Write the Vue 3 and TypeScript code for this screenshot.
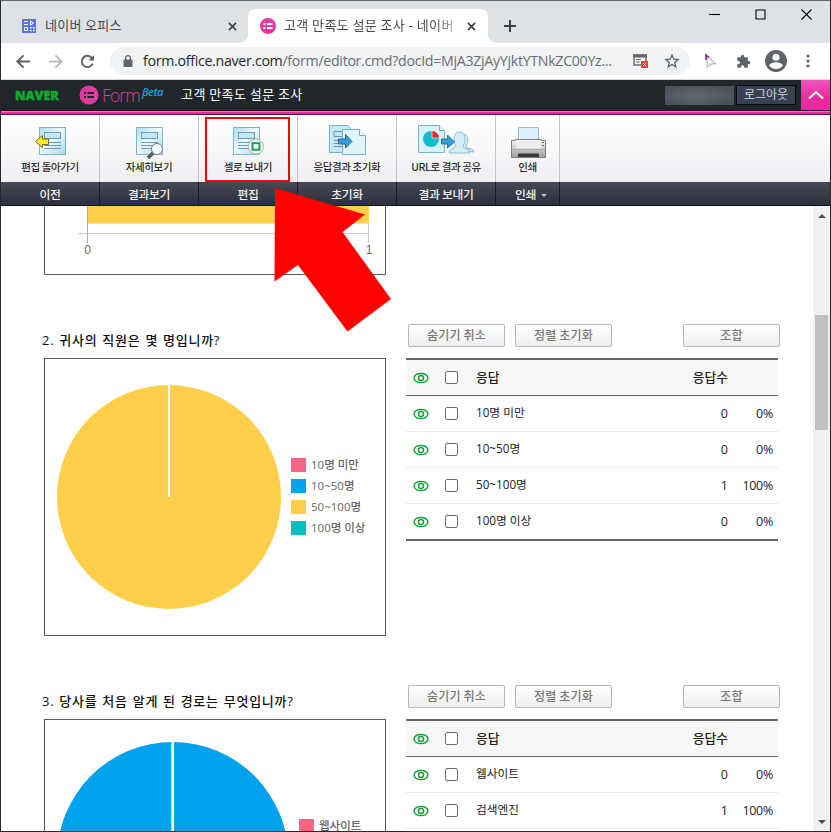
<script setup lang="ts">
interface Answer { label: string; count: number; percent: string }
interface Question {
  title: string
  answers: Answer[]
  legend: { label: string; color: string }[]
  pie: { cx: number; cy: number; r: number; color: string; gap: number }
  kind: string
}

const tools = [
  { icon: 'back', label: '편집 돌아가기', group: '이전' },
  { icon: 'detail', label: '자세히보기', group: '결과보기' },
  { icon: 'cell', label: '셀로 보내기', group: '편집' },
  { icon: 'reset', label: '응답결과 초기화', group: '초기화' },
  { icon: 'share', label: 'URL로 결과 공유', group: '결과 보내기' },
  { icon: 'print', label: '인쇄', group: '인쇄' },
]

const questions: Question[] = [
  {
    title: '2. 귀사의 직원은 몇 명입니까?',
    kind: 'staff',
    answers: [
      { label: '10명 미만', count: 0, percent: '0%' },
      { label: '10~50명', count: 0, percent: '0%' },
      { label: '50~100명', count: 1, percent: '100%' },
      { label: '100명 이상', count: 0, percent: '0%' },
    ],
    legend: [
      { label: '10명 미만', color: '#ff6384' },
      { label: '10~50명', color: '#00a2ee' },
      { label: '50~100명', color: '#ffce4b' },
      { label: '100명 이상', color: '#00c2bc' },
    ],
    pie: { cx: 124, cy: 138, r: 112, color: '#ffce4b', gap: 2 },
  },
  {
    title: '3. 당사를 처음 알게 된 경로는 무엇입니까?',
    kind: 'route',
    answers: [
      { label: '웹사이트', count: 0, percent: '0%' },
      { label: '검색엔진', count: 1, percent: '100%' },
    ],
    legend: [{ label: '웹사이트', color: '#ff6384' }],
    pie: { cx: 127.7, cy: 137.6, r: 115.6, color: '#00a2ee', gap: 2.6 },
  },
]
</script>

<template>
  <div class="window">
    <header class="tabs">
      <div class="tab idle">
        <svg class="fav" viewBox="0 0 14 14">
          <rect width="14" height="14" fill="#5a76dc" />
          <g fill="none" stroke="#fff" stroke-width="1"><path d="M2 2.5h4M2 5.5h4M2.5 8.5h3v3h-3zM8.5 2v4l3-2z" /></g>
          <g fill="#fff"><rect x="8" y="8" width="1.5" height="1.5" /><rect x="11" y="8" width="1.5" height="1.5" /><rect x="8" y="10.800" width="1.500" height="1.500" /><rect x="11" y="10.800" width="1.500" height="1.500" /></g>
        </svg>
        <span class="tab-name">네이버 오피스</span>
        <svg class="close" viewBox="0 0 10 10"><path d="M1 1l8 8M9 1L1 9" /></svg>
      </div>
      <div class="tab active">
        <svg class="fav round" viewBox="0 0 16 16">
          <circle cx="8" cy="8" r="8" fill="#e23b9f" />
          <path d="M3.500 6h2M7 6h5.500M3.500 10h2M7 10h5.500" stroke="#fff" stroke-width="2" />
        </svg>
        <span class="tab-name">고객 만족도 설문 조사 - 네이버</span>
        <svg class="close" viewBox="0 0 10 10"><path d="M1 1l8 8M9 1L1 9" /></svg>
      </div>
      <svg class="plus" viewBox="0 0 12 12"><path d="M6 0v12M0 6h12" /></svg>
      <div class="winctl">
        <svg viewBox="0 0 11 11"><path d="M0 5.500h11" /></svg>
        <svg viewBox="0 0 11 11"><path d="M1 1h9v9h-9z" /></svg>
        <svg viewBox="0 0 11 11"><path d="M.5.500l10 10M10.500.500l-10 10" /></svg>
      </div>
    </header>

    <div class="toolbar">
      <svg class="nav" viewBox="0 0 16 16"><path d="M15 8H2M8 1.500L1.500 8 8 14.500" /></svg>
      <svg class="nav dim" viewBox="0 0 16 16"><path d="M1 8h13M8 1.500L14.500 8 8 14.500" /></svg>
      <svg class="nav" viewBox="0 0 16 16"><path d="M13.500 10.200A6 6 0 1 1 12.600 4.200" /><path d="M15 1v6H9z" class="fill" /></svg>
      <div class="address">
        <svg class="lock" viewBox="0 0 10 12"><rect y="4.500" x=".5" width="9" height="7.500" rx="1" fill="#5f6368" /><path d="M2.600 5V3a2.400 2.400 0 0 1 4.800 0v2" fill="none" stroke="#5f6368" stroke-width="1.200" /></svg>
        <span class="url"><b>form.office.naver.com</b>/form/editor.cmd?docId=MjA3ZjAyYjktYTNkZC00Yz...</span>
        <svg class="blocked" viewBox="0 0 15 14">
          <path d="M1 1h12v10H1z" fill="none" stroke="#6c6f73" stroke-width="1.500" /><path d="M0 2h14" stroke="#5f6368" stroke-width="3" /><path d="M3 5.500h5M3 8h4" stroke="#6c6f73" />
          <rect x="8" y="7" width="7" height="7" fill="#ea4335" /><path d="M10 9l3 3M13 9l-3 3" stroke="#fff" />
        </svg>
        <svg class="star" viewBox="0 0 14 14"><path d="M7 1l1.700 4.200 4.500.300-3.500 2.900 1.200 4.500L7 10.400 3.100 12.900l1.200-4.500L.800 5.500l4.500-.3z" fill="none" stroke="#5f6368" stroke-width="1.300" /></svg>
      </div>
      <svg class="cursor" viewBox="0 0 12 15"><path d="M1.500 1.500l9 8-4.500.5-3.500 3z" fill="#fff" stroke="#b9bbbe" stroke-width="1.300" /><path d="M1 6V1l3 2.700" fill="none" stroke="#8d2a99" stroke-width="1.600" /></svg>
      <svg class="puzzle" viewBox="0 0 24 24"><path fill="#5f6368" d="M20.500 11H19V7a2 2 0 0 0-2-2h-4V3.500a2.500 2.500 0 0 0-5 0V5H4a2 2 0 0 0-2 2v3.800h1.500a2.700 2.700 0 0 1 0 5.400H2V20a2 2 0 0 0 2 2h3.800v-1.500a2.700 2.700 0 0 1 5.400 0V22H17a2 2 0 0 0 2-2v-4h1.500a2.500 2.500 0 0 0 0-5z" /></svg>
      <svg class="avatar" viewBox="0 0 22 22"><circle cx="11" cy="11" r="11" fill="#5f6368" /><circle cx="11" cy="7.300" r="3.500" fill="#fff" /><path d="M4 15.500c1.500-2.300 4-3.300 7-3.300s5.500 1 7 3.300c-1.500 2.300-4 3.500-7 3.500s-5.500-1.200-7-3.500z" fill="#fff" /></svg>
      <svg class="more" viewBox="0 0 4 14"><circle cx="2" cy="2" r="1.600" /><circle cx="2" cy="7" r="1.600" /><circle cx="2" cy="12" r="1.600" /></svg>
    </div>

    <div class="appbar">
      <span class="naver">NAVER</span>
      <svg class="formlogo" viewBox="0 0 20 20"><circle cx="10" cy="10" r="9.500" fill="#e23b9f" /><path d="M5 8h2M8.500 8H15M5 12h2M8.500 12H15" stroke="#20262a" stroke-width="2" /></svg>
      <span class="form">Form</span><span class="beta">βeta</span>
      <span class="doc">고객 만족도 설문 조사</span>
      <span class="user"></span>
      <button class="logout">로그아웃</button>
      <span class="collapse"><svg viewBox="0 0 16 10"><path d="M1 8.500L8 2l7 6.500" fill="none" stroke="#fff" stroke-width="2" /></svg></span>
    </div>
    <div class="strip"></div>

    <nav class="ribbon">
      <div v-for="t in tools" :key="t.icon" class="tool" :class="t.icon">
        <div class="action">
          <svg v-if="t.icon !== 'print' && t.icon !== 'share' && t.icon !== 'reset'" class="pic" viewBox="0 0 36 34">
            <defs><linearGradient id="paper" x1="0" y1="0" x2="1" y2="1"><stop offset="0" stop-color="#a8dcee" /><stop offset=".45" stop-color="#eefaff" /><stop offset="1" stop-color="#a9d9e7" /></linearGradient></defs>
            <rect x="5.500" y="2.500" width="26" height="27" fill="url(#paper)" stroke="#78b6cc" />
            <rect x="10.500" y="7.500" width="16" height="6" fill="#c3e8f6" stroke="#6b9bb4" />
            <path d="M10 17.500h17M10 20.500h17M10 23.500h17" stroke="#6c9cb1" />
            <path v-if="t.icon === 'back'" d="M1.500 16.500l7-6v3.500h6v5.500h-6V22.500z" fill="#ffe928" stroke="#786d20" />
            <g v-else-if="t.icon === 'detail'"><path d="M22 28l-5 5" stroke="#535b62" stroke-width="3.500" /><circle cx="26" cy="24" r="5.500" fill="#f7fdff" stroke="#737b80" /></g>
            <g v-else><circle cx="28" cy="21.500" r="7.500" fill="#fff" stroke="#aaa" /><rect x="24.500" y="18.200" width="7" height="6.500" fill="#fff" stroke="#119d55" stroke-width="2" /></g>
          </svg>
          <svg v-else-if="t.icon === 'reset'" class="pic wide" viewBox="0 0 40 34">
            <path d="M2.500.500h18l4 4v23h-22z" fill="#c7e9f4" stroke="#77b2c6" /><path d="M7 6.500h9v5H7zM7 15.500h9M7 18.500h9M7 21.500h9" fill="#c6e8f6" stroke="#6394a9" />
            <path d="M15.500 4.500h17l6 6v19h-23z" fill="#dff5fc" stroke="#77b2c6" /><path d="M32.500 4.500v6h6" fill="#fff" stroke="#77b2c6" />
            <path d="M11.500 14h7V9.500l6.500 7-6.500 6.500v-4h-7z" fill="#36a1dd" stroke="#32647f" />
          </svg>
          <svg v-else-if="t.icon === 'share'" class="pic share-pic" viewBox="0 0 58 34">
            <path d="M1.500.500h21l5 5v22h-26z" fill="#d8f2fc" stroke="#77b2c6" /><path d="M22.500.500v5h5" fill="#fff" stroke="#77b2c6" /><circle cx="14" cy="14" r="8" fill="#10bdce" /><path d="M15 13V5.500a8 8 0 0 1 7.500 7.500z" fill="#ed2736" stroke="#fff" stroke-width=".6" />
            <g fill="#d4edf6" stroke="#8bbdcc">
              <path d="M45 25.500v-3.500q-1.500-1-1.500-3-2.500-8 3-9.500 6 0 4 7.500-.5 2.500-1.500 4.500 1 2 5 2.500 3 .5 3 3z" />
              <path d="M32 28q0-3 4-4.500 3-1 3-3-2-2-2-5 0-8.500 5.500-8.500t5.500 8q0 3.500-2 5.500 0 2 3 3.200 4 1.300 4 4.300z" />
            </g>
            <path d="M24.500 14h6V10l7 7-7 6v-4h-6z" fill="#36a1dd" stroke="#34718f" />
          </svg>
          <svg v-else class="pic" viewBox="0 0 36 34">
            <defs><linearGradient id="metal" x2="0" y2="1"><stop stop-color="#fafafa" /><stop offset="1" stop-color="#9b9b9b" /></linearGradient></defs>
            <path d="M8.500 2.500h20v16h-20z" fill="#dcf3fd" stroke="#94bdcf" /><path d="M1.500 15.500h4v-1h26v1h4v17h-34z" fill="url(#metal)" stroke="#7f7f7f" /><path d="M6 16.500h25v7H6z" fill="#ececec" /><path d="M2 24.500h33" stroke="#aaa" /><path d="M8 28.500h21v3.500H8z" fill="#393939" /><path d="M32 17.500h2M32 20.500h2" stroke="#666" />
          </svg>
          <span class="label">{{ t.label }}</span>
        </div>
        <div class="group">{{ t.group }}<i v-if="t.icon === 'print'"></i></div>
      </div>
      <div class="rest"><div class="action"></div><div class="group"></div></div>
    </nav>

    <div class="page">
      <main class="report">
        <svg class="bar-chart" viewBox="0 0 342 69">
          <path d="M.5 0v68.500h341V0" fill="none" stroke="#595959" />
          <path d="M43.500 0v37" stroke="#aaa" /><path d="M34 27.500h291M324.500 0v37" stroke="#ccc" />
          <rect x="44" width="281" height="17.500" fill="#ffce4b" />
          <text x="43.500" y="48">0</text><text x="325" y="48">1</text>
        </svg>
        <section v-for="q in questions" :key="q.kind" class="question" :class="q.kind">
          <div class="left">
            <h2>{{ q.title }}</h2>
            <div class="chart">
              <svg class="pie" viewBox="0 0 246 276">
                <circle :cx="q.pie.cx" :cy="q.pie.cy" :r="q.pie.r" :fill="q.pie.color" />
                <path :d="`M${q.pie.cx} ${q.pie.cy - q.pie.r - 1}V${q.pie.cy}`" stroke="#fff" :stroke-width="q.pie.gap" />
              </svg>
              <ul class="legend">
                <li v-for="l in q.legend" :key="l.label"><i :style="{ background: l.color }"></i>{{ l.label }}</li>
              </ul>
            </div>
          </div>
          <div class="right">
            <div class="buttons"><button>숨기기 취소</button><button>정렬 초기화</button><button class="combine">조합</button></div>
            <div class="table">
              <div class="row head">
                <svg class="eye" viewBox="0 0 16 12"><ellipse cx="8" cy="6" rx="6.900" ry="4.600" /><circle cx="8" cy="6" r="2.500" /></svg>
                <span class="check"></span><span class="name">응답</span><span class="count">응답수</span><span class="percent"></span>
              </div>
              <div v-for="a in q.answers" :key="a.label" class="row">
                <svg class="eye" viewBox="0 0 16 12"><ellipse cx="8" cy="6" rx="6.900" ry="4.600" /><circle cx="8" cy="6" r="2.500" /></svg>
                <span class="check"></span><span class="name">{{ a.label }}</span><span class="count">{{ a.count }}</span><span class="percent">{{ a.percent }}</span>
              </div>
            </div>
          </div>
        </section>
      </main>
      <div class="scroll"><i class="up"></i><div class="thumb"></div><i class="down"></i></div>
    </div>

    <div class="highlight"></div>
    <svg class="pointer" viewBox="0 0 118 145"><path d="M1 0l90 26.500L68.500 44 117 111 73.500 143.500 24 77 .5 93.500z" fill="#f00" /></svg>
  </div>
</template>

<style>
body { margin: 0; overflow: hidden; }
</style>

<style scoped>
* { box-sizing: border-box; }
svg { display: block; flex: none; overflow: visible; }
.window { position: relative; width: 831px; height: 832px; border: 1px solid #25282c; border-top-color: #65666b; background: #fff; display: flex; flex-direction: column; overflow: hidden; font-family: "Open Sans", "Noto Sans CJK KR", sans-serif; font-size: 13px; white-space: nowrap; }
.tabs { height: 42px; flex: none; background: #dee1e6; display: flex; align-items: flex-end; }
.tab { height: 34px; display: flex; align-items: center; color: #45494d; font: 13px "Noto Sans CJK KR", sans-serif; letter-spacing: .3px; }
.tab.idle { width: 247px; padding: 0 11px 0 21px; }
.tab.active { width: 240px; padding: 0 12px; background: #fff; border-radius: 8px 8px 0 0; position: relative; letter-spacing: .4px; }
.tab.active::before, .tab.active::after { content: ""; position: absolute; bottom: 0; width: 8px; height: 8px; }
.tab.active::before { left: -8px; background: radial-gradient(circle at 0 0, transparent 7.5px, #fff 8px); }
.tab.active::after { right: -8px; background: radial-gradient(circle at 100% 0, transparent 7.5px, #fff 8px); }
.fav { width: 14px; height: 14px; margin-right: 9px; }
.fav.round { width: 16px; height: 16px; margin-right: 8px; }
.tab-name { flex: 1; overflow: hidden; padding-bottom: 3px; }
.active .tab-name { flex: none; width: 172px; margin-right: auto; -webkit-mask-image: linear-gradient(90deg, #000 88%, rgba(0,0,0,.3)); mask-image: linear-gradient(90deg, #000 88%, rgba(0,0,0,.3)); }
.close { width: 9px; height: 9px; stroke: #3c4043; stroke-width: 1.8; }
.plus { width: 12px; height: 12px; margin: 0 0 11px 16px; stroke: #3c4043; stroke-width: 2; }
.winctl { margin-left: auto; align-self: flex-start; display: flex; gap: 35px; padding: 8px 18px 0 0; }
.winctl svg { width: 11px; height: 11px; fill: none; stroke: #000; stroke-width: 1.1; }
.toolbar { height: 37px; flex: none; display: flex; align-items: center; padding: 0 20px 0 15px; border-bottom: 1px solid #d5d7da; }
.nav { width: 15px; height: 15px; margin-right: 17px; fill: none; stroke: #5f6368; stroke-width: 2.1; }
.nav.dim { stroke: #b9bbbe; }
.nav .fill { fill: #5f6368; stroke: none; }
.address { width: 580px; height: 28px; border-radius: 14px; background: #f1f3f4; display: flex; align-items: center; padding: 0 11px 0 13px; margin-left: -2px; }
.lock { width: 10px; height: 12px; }
.url { margin-left: 10px; width: 473px; font-size: 14.2px; letter-spacing: -.3px; color: #6a6d72; padding-bottom: 1px; }
.url b { color: #25282c; font-weight: 400; }
.blocked { width: 15px; height: 14px; margin-left: 17px; }
.star { width: 14px; height: 14px; margin-left: auto; }
.cursor { width: 12px; height: 15px; margin-left: 15px; }
.puzzle { width: 15px; height: 15px; margin-left: 19px; }
.avatar { width: 22px; height: 22px; margin-left: 14px; }
.more { width: 4px; height: 14px; margin-left: auto; fill: #5f6368; }
.appbar { height: 30px; flex: none; display: flex; align-items: center; background: #20262a; padding-left: 14px; color: #fff; }
.naver { width: 64px; font: 800 12.600px "Open Sans", sans-serif; color: #0faa2c; -webkit-text-stroke: .5px #0faa2c; }
.formlogo { width: 20px; height: 20px; }
.form { margin-left: 3px; width: 39px; font: 300 17.500px "Open Sans", sans-serif; letter-spacing: -.9px; color: #e23b9f; }
.beta { width: 40px; padding: 0 0 7px 1px; font: italic 600 11px "Open Sans", sans-serif; letter-spacing: -.5px; color: #11a4dc; }
.doc { font: 13px "Noto Sans CJK KR", sans-serif; letter-spacing: .45px; padding-bottom: 3px; }
.user { margin-left: auto; width: 69px; height: 19px; margin-right: 2px; background: radial-gradient(ellipse at 45% 50%, #626a6f, #4a5156 80%); }
.logout { width: 60px; height: 20px; padding: 0 0 2px; margin-right: 5px; border: 1px solid #06090b; background: #37414f; color: #d2d6db; font: 12px/16px "Noto Sans CJK KR", sans-serif; }
.collapse { width: 29px; height: 30px; display: flex; align-items: center; justify-content: center; background: linear-gradient(#f157ba, #e62c9f 60%); }
.collapse svg { width: 16px; height: 10px; }
.strip { height: 5px; flex: none; background: linear-gradient(#350a26 1px, #f077bd 1px 2px, #e42f9e 2px 4px, #4e1238 4px); }
.ribbon { height: 91px; flex: none; display: flex; }
.tool { width: 99px; display: flex; flex-direction: column; }
.tool.print { width: 64px; }
.rest { flex: 1; display: flex; flex-direction: column; }
.action { height: 67px; display: flex; flex-direction: column; align-items: center; background: linear-gradient(#fff, #f9f9fb 45%, #eeeef3); border-right: 1px solid #c4c5ca; padding-top: 10px; }
.rest .action, .rest .group { border-right: 0; }
.pic { width: 36px; height: 34px; }
.back .pic { margin-left: 4px; }
.cell .pic { margin-right: 4px; }
.pic.wide { width: 40px; }
.share-pic { width: 58px; }
.label { font: 500 10.5px/16px "Noto Sans CJK KR", sans-serif; letter-spacing: -.4px; color: #2b2b2b; }
.group { height: 24px; display: flex; align-items: center; justify-content: center; background: linear-gradient(#464a55, #2b303b); border-right: 1px solid #181c25; border-bottom: 1px solid #11141a; color: #f1f1f3; font: 500 11.800px/20px "Noto Sans CJK KR", sans-serif; letter-spacing: -.3px; }
.print .group { padding-left: 7px; }
.group i { border: 3px solid transparent; border-top-color: #c0c2c7; border-bottom: 0; margin: 3px 0 0 5px; }
.page { flex: 1; min-height: 0; display: flex; overflow: hidden; }
.report { flex: 1; padding-left: 43px; }
.bar-chart { width: 342px; height: 69px; margin-bottom: 49px; }
.bar-chart text { font: 12px "Liberation Sans", sans-serif; fill: #666; text-anchor: middle; }
.question { display: flex; gap: 20px; height: 312px; margin-bottom: 49px; }
.left { width: 342px; }
h2 { margin: 0 0 0 -2px; height: 34px; padding-top: 1px; font: 500 13px/30px "Open Sans", "Noto Sans CJK KR", sans-serif; letter-spacing: .75px; word-spacing: .8px; color: #111; }
.chart { height: 278px; border: 1px solid #595959; display: flex; }
.pie { width: 246px; height: 276px; }
.legend { list-style: none; margin: 95px 0 0; padding: 0; font: 500 11.500px/21px "Open Sans", "Noto Sans CJK KR", sans-serif; color: #666; }
.route .legend { margin-left: 8px; }
.legend li { display: flex; align-items: center; height: 21px; }
.legend i { width: 15px; height: 14px; margin-right: 5px; }
.right { width: 374px; }
.buttons { display: flex; height: 34px; padding-left: 2px; gap: 10px; }
.buttons button { width: 97px; height: 23px; padding: 0 0 2px; border: 1px solid #b6b6b6; border-radius: 2px; background: linear-gradient(#fff, #eee); color: #777; font: 500 12px/18px "Noto Sans CJK KR", sans-serif; letter-spacing: .2px; }
.buttons .combine { margin-left: auto; }
.table { width: 372px; border-top: 2px solid #666; }
.row { height: 36px; display: flex; align-items: center; border-bottom: 1px solid #ebebeb; padding-left: 7px; }
.staff .row:last-child { height: 37px; border-bottom: 2px solid #666; }
.head { background: #f7f7f7; border-color: #666; color: #111; }
.eye { width: 16px; height: 12px; fill: none; stroke: #13a538; stroke-width: 1.5; }
.check { width: 13px; height: 13px; border: 1px solid #6e6e6e; border-radius: 2px; background: #fff; margin: 0 18px 0 16px; flex: none; }
.name { flex: 1; font: 11.700px/18px "Open Sans", "Noto Sans CJK KR", sans-serif; padding-bottom: 3px; color: #222; }
.count { width: 60px; text-align: right; font-size: 12.500px; color: #222; }
.percent { width: 50px; padding-right: 5px; text-align: right; font-size: 12.500px; letter-spacing: -.3px; color: #222; }
.head .name, .head .count { font: 500 12.800px/18px "Noto Sans CJK KR", sans-serif; padding-bottom: 1px; }
.scroll { width: 17px; background: #f1f1f1; display: flex; flex-direction: column; align-items: center; }
.thumb { width: 13px; height: 115px; background: #c1c1c1; margin-top: 97px; }
.scroll i { border: 4px solid transparent; }
.up { border-top: 0 !important; border-bottom-color: #505050 !important; margin-top: 8px; }
.down { border-bottom: 0 !important; border-top-color: #505050 !important; margin: auto 0 7px; }
.highlight { position: absolute; left: 204px; top: 116px; width: 85px; height: 65px; border: 2px solid #f00; }
.pointer { position: absolute; left: 273px; top: 187px; width: 118px; height: 145px; }
</style>
